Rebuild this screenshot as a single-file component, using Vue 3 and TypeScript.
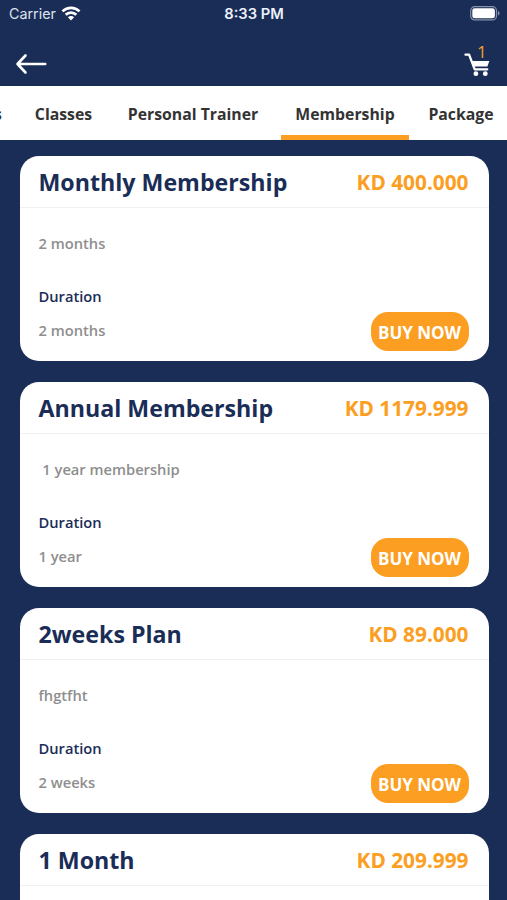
<script setup lang="ts">
interface Plan {
  title: string
  price: string
  description?: string
  duration?: string
}

interface Tab {
  label: string
  key: string
}

const tabs: Tab[] = [
  { key: 'first', label: 's' },
  { key: 'classes', label: 'Classes' },
  { key: 'trainer', label: 'Personal Trainer' },
  { key: 'membership', label: 'Membership' },
  { key: 'package', label: 'Package' },
]
const activeTab = 'membership'

const plans: Plan[] = [
  { title: 'Monthly Membership', price: 'KD 400.000', description: '2 months', duration: '2 months' },
  { title: 'Annual Membership', price: 'KD 1179.999', description: ' 1 year membership', duration: '1 year' },
  { title: '2weeks Plan', price: 'KD 89.000', description: 'fhgtfht', duration: '2 weeks' },
  { title: '1 Month', price: 'KD 209.999' },
]
</script>

<template>
  <div class="screen">
    <div class="status">
      <div class="carrier">
        <span>Carrier</span>
        <svg class="wifi" width="20" height="15" viewBox="0 0 20 15">
          <g fill="none" stroke="#fff" stroke-width="2.7">
            <path d="M1.5 5.4a12.2 12.2 0 0 1 17 0" />
            <path d="M4.7 8.7a7.6 7.6 0 0 1 10.6 0" />
          </g>
          <path d="M10 14.4 6.9 11.2a4.4 4.4 0 0 1 6.2 0z" fill="#fff" />
        </svg>
      </div>
      <span class="time">8:33 PM</span>
      <svg class="battery" width="31" height="15" viewBox="0 0 31 15">
        <rect x=".7" y=".7" width="25.8" height="13.2" rx="4" fill="none" stroke="#8792ab" stroke-width="1.2" />
        <rect x="2.3" y="2.3" width="22.6" height="10" rx="2.4" fill="#fff" />
        <path d="M28 5c2 .6 2 4 0 4.6z" fill="#8792ab" />
      </svg>
    </div>

    <header class="nav">
      <svg class="back" width="32" height="22" viewBox="0 0 32 22">
        <path d="M10.5 2.5 2.5 11l8 8.5M2.5 11h27.7" fill="none" stroke="#fff" stroke-width="2.6" stroke-linecap="round" stroke-linejoin="round" />
      </svg>
      <div class="cart">
        <svg width="28" height="26" viewBox="0 0 28 26">
          <path d="M2.5 2.7h3.6l5.6 14.6h12.6" fill="none" stroke="#fff" stroke-width="2.3" stroke-linejoin="round" stroke-linecap="round" />
          <path d="M9.3 8.9h17l-1.9 5.7H11.4z" fill="#fff" />
          <circle cx="12.9" cy="21.7" r="2.4" fill="#fff" />
          <circle cx="22.3" cy="21.7" r="2.4" fill="#fff" />
        </svg>
        <span class="count">1</span>
      </div>
    </header>

    <nav class="tabs">
      <div v-for="tab in tabs" :key="tab.key" class="tab" :class="[tab.key, { active: tab.key === activeTab }]">
        {{ tab.label }}
      </div>
    </nav>

    <main class="plans">
      <article v-for="plan in plans" :key="plan.title" class="card">
        <div class="card-head">
          <h2>{{ plan.title }}</h2>
          <span class="price">{{ plan.price }}</span>
        </div>
        <div v-if="plan.duration" class="card-body">
          <div class="details">
            <p class="muted">{{ plan.description }}</p>
            <p class="label">Duration</p>
            <p class="muted">{{ plan.duration }}</p>
          </div>
          <button class="buy">BUY NOW</button>
        </div>
      </article>
    </main>
  </div>
</template>

<style>
body {
  background: #1a2d57;
  overflow: hidden;
}
</style>

<style scoped>
.screen {
  width: 507px;
  height: 900px;
  overflow: hidden;
  background: #1a2d57;
  font-family: 'Open Sans', 'Noto Sans', sans-serif;
}
.status {
  height: 27px;
  display: grid;
  grid-template-columns: 1fr auto 1fr;
  align-items: center;
  padding: 0 6px 0 9px;
  color: #fff;
  font-family: Inter, 'Liberation Sans', sans-serif;
  font-size: 14.3px;
}
.carrier {
  display: flex;
  align-items: center;
  gap: 5px;
  color: #dce2ee;
}
.wifi {
  margin-top: -1px;
}
.time {
  font-size: 14.7px;
  font-weight: 600;
  color: #edf1fa;
  transform: translateX(-1px);
}
.battery {
  justify-self: end;
}
.nav {
  height: 59px;
  display: flex;
  justify-content: space-between;
  padding: 0 16px 0 15px;
}
.back {
  margin-top: 26px;
}
.cart {
  position: relative;
  margin-top: 25px;
  height: 26px;
}
.cart svg {
  display: block;
}
.count {
  position: absolute;
  left: 14px;
  top: -10px;
  font-size: 17px;
  line-height: 20px;
  color: #fb9e22;
}
.tabs {
  display: flex;
  height: 54px;
  background: #fff;
}
.tab {
  box-sizing: border-box;
  flex: none;
  border-bottom: 5px solid transparent;
  line-height: 56px;
  text-align: center;
  white-space: nowrap;
  font-size: 15.8px;
  font-weight: 700;
  color: #333;
}
.first {
  width: 22px;
  text-align: left;
  text-indent: -6px;
}
.classes {
  width: 83px;
}
.trainer {
  width: 176px;
}
.membership {
  width: 128px;
}
.package {
  width: 104px;
}
.active {
  border-bottom-color: #fb9e22;
}
.plans {
  display: flex;
  flex-direction: column;
  gap: 21px;
  padding: 16px 18.5px 0 19.5px;
}
.card {
  flex: none;
  height: 205px;
  border-radius: 19px;
  background: #fff;
  overflow: hidden;
}
.card-head {
  box-sizing: border-box;
  height: 52px;
  display: flex;
  align-items: center;
  justify-content: space-between;
  padding: 1px 20px 0 19px;
  border-bottom: 1px solid #f0f0f2;
}
h2 {
  margin: 0;
  font-size: 23.2px;
  line-height: 32px;
  font-weight: 700;
  color: #1a2d57;
}
.price {
  font-size: 20.8px;
  line-height: 32px;
  font-weight: 700;
  color: #fb9e22;
}
.card-body {
  height: 153px;
  box-sizing: border-box;
  display: flex;
  justify-content: space-between;
  align-items: flex-end;
  padding: 24.6px 20px 9.6px 19px;
}
.details {
  align-self: flex-start;
}
p {
  margin: 0;
  font-size: 14.7px;
  line-height: 20px;
  font-weight: 600;
  white-space: pre;
}
.muted {
  color: #8e8e8e;
}
.label {
  margin: 33px 0 14.8px;
  color: #1a2d57;
}
.buy {
  width: 98px;
  height: 39px;
  padding: 2px 0 0;
  border: 0;
  border-radius: 17px;
  background: #fb9e22;
  color: #fff;
  font: 700 17px/37px 'Open Sans', sans-serif;
}
</style>
